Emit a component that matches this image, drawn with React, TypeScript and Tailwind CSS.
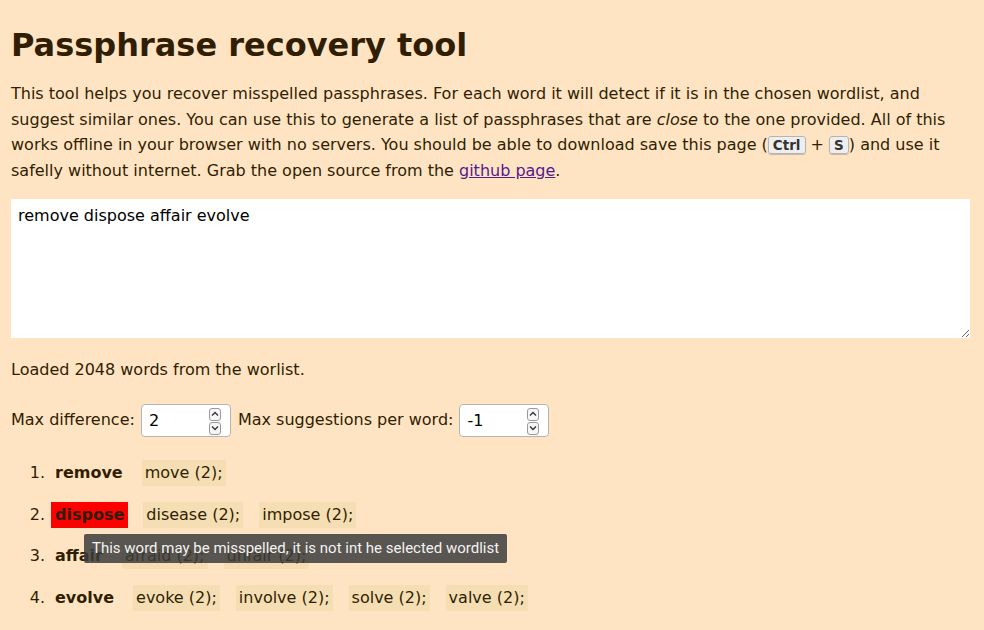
import React from "react";

function Spinner() {
  return (
    <div className="absolute right-[9px] top-[3px] flex flex-col gap-[1px]">
      <div className="w-[12px] h-[13px] border border-[#9a9a9a] rounded-[3px] bg-[#f6f6f6] flex items-center justify-center">
        <svg width="8" height="6" viewBox="0 0 8 6"><path d="M1 4.5 L4 1.5 L7 4.5" fill="none" stroke="#333" strokeWidth="1.3" /></svg>
      </div>
      <div className="w-[12px] h-[13px] border border-[#9a9a9a] rounded-[3px] bg-[#f6f6f6] flex items-center justify-center">
        <svg width="8" height="6" viewBox="0 0 8 6"><path d="M1 1.5 L4 4.5 L7 1.5" fill="none" stroke="#333" strokeWidth="1.3" /></svg>
      </div>
    </div>
  );
}

function NumBox({ value }: { value: string }) {
  return (
    <div className="relative w-[90px] h-[33px] bg-white border border-[#b5b5b5] rounded-[4px]">
      <input
        type="text"
        defaultValue={value}
        className="w-full h-full bg-transparent pl-[7px] pr-[26px] text-black outline-none text-[16px]"
      />
      <Spinner />
    </div>
  );
}

function Chip({ children }: { children: React.ReactNode }) {
  return <span className="bg-[#f5deb3] px-[3px] h-[26px] flex items-center">{children}</span>;
}

const rows: { word: string; bad?: boolean; sugg: string[] }[] = [
  { word: "remove", sugg: ["move (2);"] },
  { word: "dispose", bad: true, sugg: ["disease (2);", "impose (2);"] },
  { word: "affair", sugg: ["afraid (2);", "unfair (2);"] },
  { word: "evolve", sugg: ["evoke (2);", "involve (2);", "solve (2);", "valve (2);"] },
];

const kbdCls =
  "font-['DejaVu_Sans',sans-serif] font-bold text-[13.5px] leading-[17px] px-[4px] bg-[#eeeeee] border border-[#b4b4b4] rounded-[3px] shadow-[0_1px_1px_rgba(0,0,0,0.2)] text-[#333]";

export default function App() {
  return (
    <div className="min-h-screen bg-[#ffe4c4] text-[#2f1e02] font-['DejaVu_Sans',sans-serif] px-[11px] pb-6 relative">
      <h1 className="text-[32px] font-bold leading-[37px] pt-[27px]">Passphrase recovery tool</h1>
      <p className="text-[16px] leading-[1.6] mt-[17px] pr-[3px]">
        This tool helps you recover misspelled passphrases. For each word it will detect if it is in the chosen wordlist, and
        suggest similar ones. You can use this to generate a list of passphrases that are <em>close</em> to the one provided. All
        of this works offline in your browser with no servers. You should be able to download save this page (
        <kbd className={kbdCls}>Ctrl</kbd> + <kbd className={kbdCls}>S</kbd>
        ) and use it safelly without internet. Grab the open source from the{" "}
        <a href="#" className="text-[#551a8b] underline">github page</a>.
      </p>
      <textarea
        defaultValue="remove dispose affair evolve"
        className="block mt-[16px] w-[959px] h-[139px] bg-white text-black text-[16px] leading-normal pl-[7px] pt-[5px] outline-none border-0"
      />
      <p className="text-[16px] leading-[1.6] mt-[19px]">Loaded 2048 words from the worlist.</p>
      <div className="flex items-center gap-[6px] mt-[21px] text-[16px]">
        <span>Max difference:</span>
        <NumBox value="2" />
        <span className="ml-[1px]">Max suggestions per word:</span>
        <NumBox value="-1" />
      </div>
      <ol className="mt-[23px] flex flex-col gap-[15.7px] text-[16px]">
        {rows.map((r, i) => (
          <li key={r.word} className="flex items-center h-[26px] relative">
            <span className="w-[40px] text-right pr-[6px]">{i + 1}.</span>
            <span className={`font-bold px-[4px] h-[26px] flex items-center ${r.bad ? "bg-[#ff0000]" : ""}`}>{r.word}</span>
            <div className="flex items-center gap-[16px] ml-[15px]">
              {r.sugg.map((s) => (
                <Chip key={s}>{s}</Chip>
              ))}
            </div>
            {r.bad && (
              <div className="absolute left-[73px] top-[32px] z-10 h-[29px] px-[8px] flex items-center bg-[#3c3c3c]/85 text-[#f2f2f2] font-['Roboto',sans-serif] text-[15px] whitespace-nowrap rounded-[2px]">
                This word may be misspelled, it is not int he selected wordlist
              </div>
            )}
          </li>
        ))}
      </ol>
    </div>
  );
}
